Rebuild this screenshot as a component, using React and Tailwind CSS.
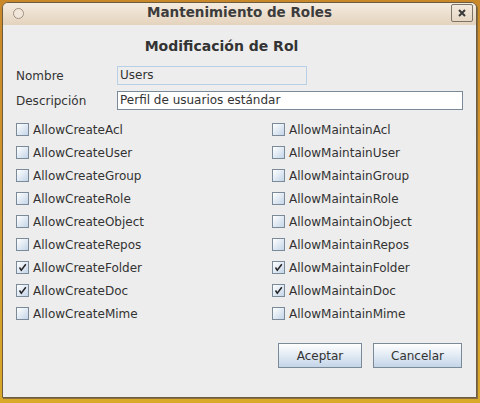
import React from "react";

const left = [
  ["AllowCreateAcl", false],
  ["AllowCreateUser", false],
  ["AllowCreateGroup", false],
  ["AllowCreateRole", false],
  ["AllowCreateObject", false],
  ["AllowCreateRepos", false],
  ["AllowCreateFolder", true],
  ["AllowCreateDoc", true],
  ["AllowCreateMime", false],
];
const right = [
  ["AllowMaintainAcl", false],
  ["AllowMaintainUser", false],
  ["AllowMaintainGroup", false],
  ["AllowMaintainRole", false],
  ["AllowMaintainObject", false],
  ["AllowMaintainRepos", false],
  ["AllowMaintainFolder", true],
  ["AllowMaintainDoc", true],
  ["AllowMaintainMime", false],
];

function Check({ label, checked }) {
  return (
    <div className="flex items-center h-[23px]">
      <div className="w-[13px] h-[13px] border border-[#7a8a99] bg-gradient-to-br from-[#ffffff] to-[#c4d5e8] flex items-center justify-center">
        {checked && (
          <svg width="9" height="9" viewBox="0 0 9 9">
            <path d="M1.5 4.5 L3.3 7.3 L7.8 1.2" stroke="#222" strokeWidth="1.5" fill="none" />
          </svg>
        )}
      </div>
      <span className="ml-[4px] text-[12px] text-[#333333]">{label}</span>
    </div>
  );
}

export default function App() {
  return (
    <div
      className="w-[480px] h-[403px] bg-gradient-to-b from-[#c9882a] to-[#d9a92a] pt-[2px] pl-[2px] overflow-hidden"
      style={{ fontFamily: '"DejaVu Sans", sans-serif' }}
    >
      <div className="w-[475px] h-[396px] flex flex-col rounded-t-[6px] border border-[#6e5a3c] bg-[#ededed] overflow-hidden shadow-[1px_1px_0_#8a7040]">
        <div className="h-[22px] flex items-start pl-[10px] pr-[3px] bg-gradient-to-b from-[#f4ebe0] to-[#e4d3bd]">
          <div className="mt-[5px] w-[11px] h-[11px] rounded-full border border-[#a09080] bg-[#f0e6da]" />
          <div className="flex-1 text-center text-[13.5px] leading-[18px] font-bold text-[#3c3c3c] pt-[0px] pl-[4px]">
            Mantenimiento de Roles
          </div>
          <div className="mt-[1px] w-[22px] h-[18px] border border-[#7c7466] rounded-[2px] flex items-center justify-center">
            <svg width="10" height="10" viewBox="0 0 10 10">
              <path d="M2 2 L8 8 M8 2 L2 8" stroke="#3a3a3a" strokeWidth="2" />
            </svg>
          </div>
        </div>
        <div className="flex-1 flex flex-col pl-[13px] pr-[13px]">
          <div className="h-[19px] mt-[11px] text-center text-[14px] font-bold text-[#333333] pr-[36px]">
            Modificación de Rol
          </div>
          <div className="flex items-center mt-[11px] h-[19px]">
            <span className="w-[101px] text-[12px] text-[#333333]">Nombre</span>
            <div className="w-[190px] h-[19px] border border-[#b8cfe5] px-[2px] text-[12px] text-[#333333] leading-[17px]">
              Users
            </div>
          </div>
          <div className="flex items-center mt-[6px] h-[19px]">
            <span className="w-[101px] text-[12px] text-[#333333]">Descripción</span>
            <div className="w-[346px] h-[19px] border border-[#7a8a99] bg-white px-[2px] text-[12px] text-[#333333] leading-[17px]">
              Perfil de usuarios estándar
            </div>
          </div>
          <div className="flex mt-[8px]">
            <div className="w-[256px] flex flex-col">
              {left.map(([l, c]) => (
                <Check key={l} label={l} checked={c} />
              ))}
            </div>
            <div className="flex flex-col">
              {right.map(([l, c]) => (
                <Check key={l} label={l} checked={c} />
              ))}
            </div>
          </div>
          <div className="flex justify-end gap-[11px] mt-[18px] pr-[1px]">
            <button className="w-[84px] h-[25px] border border-[#7a8a99] bg-gradient-to-b from-[#ffffff] to-[#c4d5e8] text-[12px] text-[#333333]">
              Aceptar
            </button>
            <button className="w-[89px] h-[25px] border border-[#7a8a99] bg-gradient-to-b from-[#ffffff] to-[#c4d5e8] text-[12px] text-[#333333]">
              Cancelar
            </button>
          </div>
        </div>
      </div>
    </div>
  );
}
